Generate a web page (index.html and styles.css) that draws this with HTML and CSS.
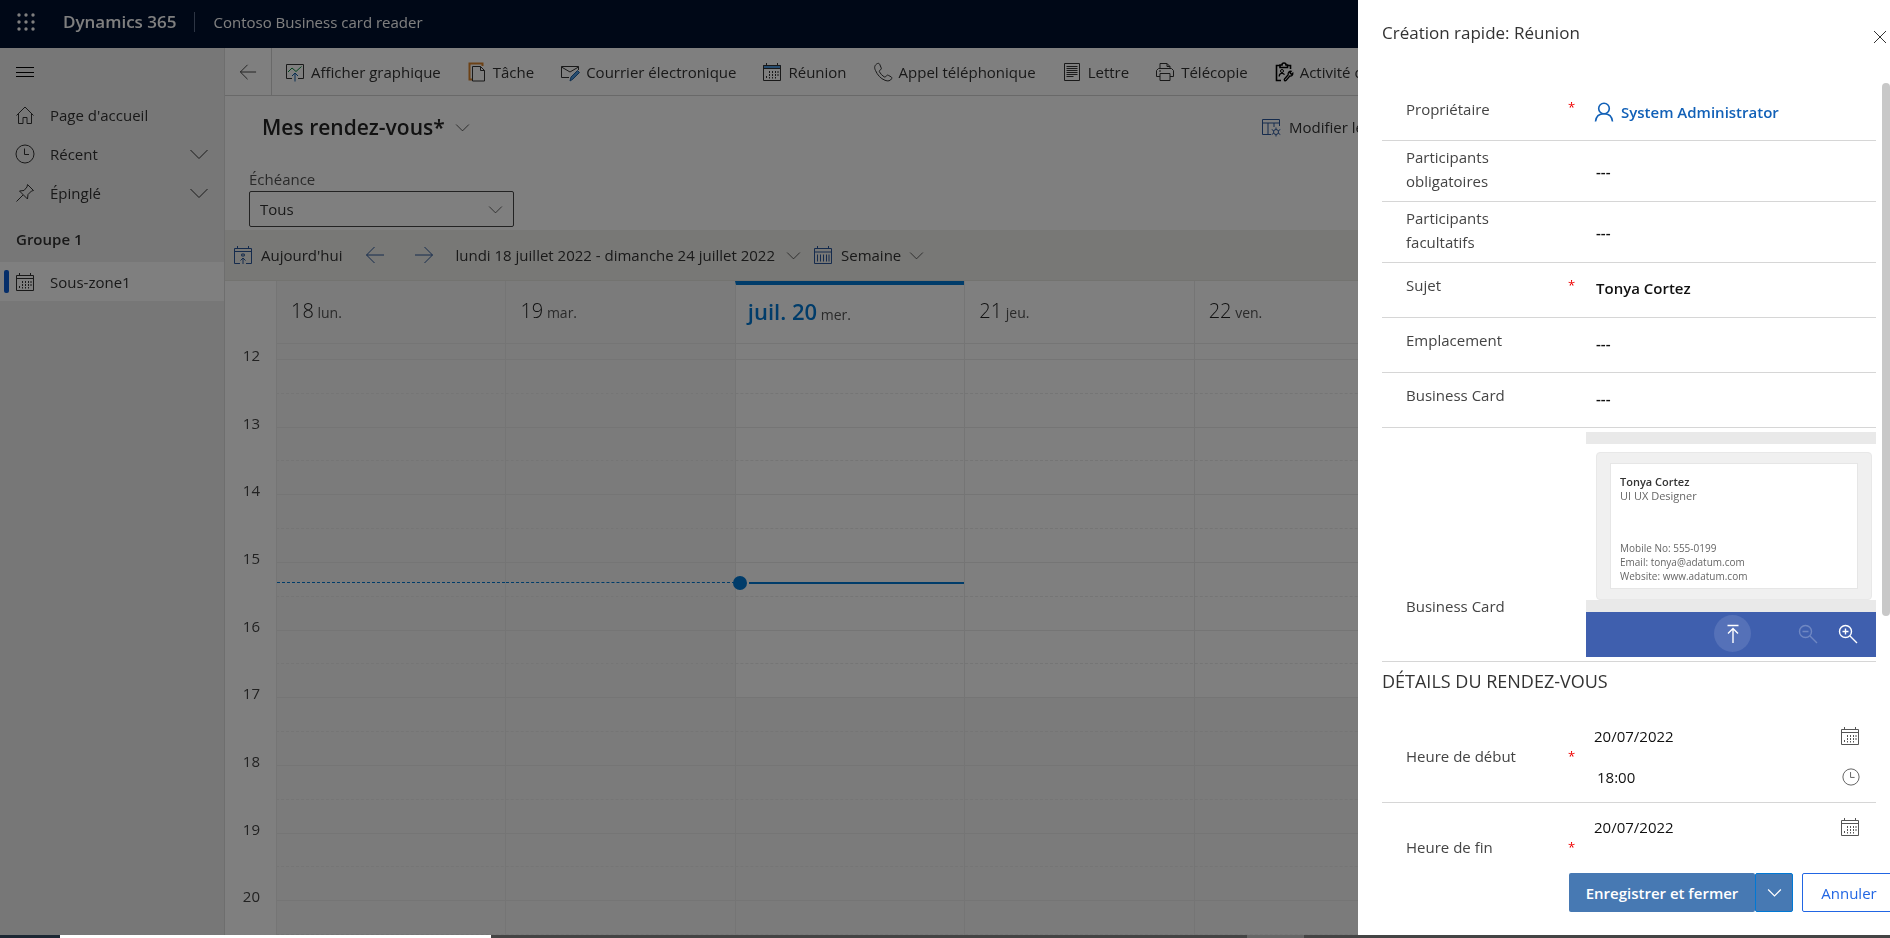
FILE: index.html
```html
<!DOCTYPE html>
<html lang="fr">
<head>
  <meta charset="UTF-8" />
  <meta name="viewport" content="width=device-width, initial-scale=1" />
  <title>Mes rendez-vous - Dynamics 365</title>
  <link rel="stylesheet" href="styles.css">
</head>
<body>
  <svg class="sprite" aria-hidden="true">
    <symbol id="i-waffle" viewBox="0 0 20 20">
      <g fill="currentColor"><circle cx="3" cy="3" r="1.700"/><circle cx="10" cy="3" r="1.700"/><circle cx="17" cy="3" r="1.700"/><circle cx="3" cy="10" r="1.700"/><circle cx="10" cy="10" r="1.700"/><circle cx="17" cy="10" r="1.700"/><circle cx="3" cy="17" r="1.700"/><circle cx="10" cy="17" r="1.700"/><circle cx="17" cy="17" r="1.700"/></g>
    </symbol>
    <symbol id="i-menu" viewBox="0 0 20 20"><path d="M1 5.500h18M1 10.500h18M1 14.500h18"/></symbol>
    <symbol id="i-home" viewBox="0 0 20 20"><path d="M1.500 10.500 10 2l8.500 8.500M3.500 9v9.500h4.500v-6h4v6h4.500V9"/></symbol>
    <symbol id="i-clock" viewBox="0 0 20 20"><circle cx="10" cy="10" r="9"/><path d="M9.500 4.500v6H14"/></symbol>
    <symbol id="i-pin" viewBox="0 0 20 20"><path d="m12.500 1.500 6 6-2 .5-3.500 3.500-.5 4.500-8-8L9 7.500 12 4zM8 12l-6.500 6.500"/></symbol>
    <symbol id="i-down" viewBox="0 0 20 20"><path d="m1.500 6 8.500 8.500L18.500 6"/></symbol>
    <symbol id="i-left" viewBox="0 0 20 20"><path d="M19 10H1.500M9.500 2l-8 8 8 8"/></symbol>
    <symbol id="i-right" viewBox="0 0 20 20"><path d="M1 10h17.500M10.500 2l8 8-8 8"/></symbol>
    <symbol id="i-close" viewBox="0 0 20 20"><path d="m4 4 12 12M16 4 4 16"/></symbol>
    <symbol id="i-calendar" viewBox="0 0 20 20">
      <path d="M1.500 3.500h17v15h-17zM1.500 6.500h17M4.500 1v3M15.500 1v3"/>
      <path d="M4.500 14v2.500M7.500 9v7.500M10.500 9v7.500M13.500 9v7.500M16 9v5" stroke-dasharray="2 1"/>
    </symbol>
    <symbol id="i-week" viewBox="0 0 20 20">
      <path d="M1.500 3.500h17v15h-17zM1.500 7h17M4.500 1v3M15.500 1v3M4.500 9.500v7M7.500 9.500v7M10.500 9.500v7M13.500 9.500v7M16 9.500v7"/>
    </symbol>
    <symbol id="i-today" viewBox="0 0 20 20"><path d="M7 18.500H1.500v-15h17v15H13M1.500 6.500h17M4.500 1v3M15.500 1v3M10 19v-6M7.500 15.500 10 13l2.500 2.500M8.700 9h2.600v2H8.700z"/></symbol>
    <symbol id="i-chart" viewBox="0 0 20 20">
      <path d="M7 16.500H1.500v-14h17v14H13"/>
      <path class="green" d="m3 10 4-4 4 3.500 5.500-5"/>
      <path class="blue" d="M10 19.500V11M7 14l3-3 3 3"/>
    </symbol>
    <symbol id="i-task" viewBox="0 0 20 20">
      <path class="orange" d="M6 17.500H2.500v-16h13V4"/>
      <path d="M5.500 4.500h8l4 4v10.500h-12zM13.500 4.500v4h4"/>
    </symbol>
    <symbol id="i-mail" viewBox="0 0 20 20">
      <path d="M9 15.500H1.500v-11h17V8M1.500 5 10 10l8.500-5"/>
      <path class="blue-fill" d="m10 19 1-4 6.500-6.500 2 2L13 17z"/>
    </symbol>
    <symbol id="i-meeting" viewBox="0 0 20 20">
      <path class="blue-fill" d="M1.500 3.500h17v3h-17z"/>
      <path d="M1.500 3.500h17v15h-17zM1.500 6.500h17M4.500 1v3M15.500 1v3"/>
      <path d="M4.500 14v2.500M7.500 9v7.500M10.500 9v7.500M13.500 9v7.500M16 9v5" stroke-dasharray="2 1"/>
    </symbol>
    <symbol id="i-phone" viewBox="0 0 20 20"><path d="M4.500 1.500c-3 1.500-3.500 4-2 7 2 4.500 5 8 9.500 9.800 3 1.200 5.500.7 6.700-1.800.3-.8 0-1.300-.7-1.700l-2.700-1.500c-.7-.4-1.300-.2-1.800.4l-.8 1c-.5.500-1 .5-1.600.1-2-1.300-3.500-2.800-4.600-4.900-.4-.7-.3-1.200.3-1.600l1-.7c.6-.5.700-1 .4-1.700L6.700 2.300C6.200 1.400 5.400 1.100 4.500 1.500z"/></symbol>
    <symbol id="i-letter" viewBox="0 0 20 20"><path d="M2.500 1.500h15v17h-15z"/><path d="M4.500 4.500h11M4.500 6.500h11M4.500 8.500h11M4.500 10.500h11M4.500 12.500h11M4.500 14.500h7"/></symbol>
    <symbol id="i-fax" viewBox="0 0 20 20"><path d="M5 14.500H1.500v-6l2-2h13l2 2v6H15M5 6.500v-5h7l3 3v2M12 1.500v3h3M5 11.500h10v7H5zM4 9h2"/></symbol>
    <symbol id="i-activity" viewBox="0 0 20 20">
      <path stroke-width="1.600" d="M7 18.500H2.500v-15H6M13.500 3.500h3V7M6 5.500v-2.500h2a2 2 0 0 1 4 0h1.500v2.500z"/>
      <circle cx="8" cy="9" r="1.500"/>
      <path stroke-width="1.300" d="M5.200 14.500c0-3.500 4-4 5.300-1.800M10.500 17l3.700-4.200c-.5-2 1-3.800 3-3.500L16 11l1.200 1.200 1.600-1c.2 2-1.300 3.200-3 2.800L12 18.500c-1 .8-2.300-.5-1.500-1.500z"/>
    </symbol>
    <symbol id="i-columns" viewBox="0 0 20 20">
      <path d="M10 17.500H1.500v-15h17V9M1.500 6h17M7 6v11.500M13 6v4"/>
      <circle cx="15" cy="15" r="2.500"/>
      <path d="M15 10.500v2M15 17.500v2M10.700 12.500l2 1.200M17.300 16.300l2 1.200M19.300 12.500l-2 1.200M12.700 16.300l-2 1.200"/>
    </symbol>
    <symbol id="i-user" viewBox="0 0 20 20"><circle cx="10" cy="6.500" r="5.300"/><path d="M1.500 19.500c.5-5 4-7.700 8.500-7.700s8 2.700 8.500 7.700"/></symbol>
    <symbol id="i-upload" viewBox="0 0 20 20"><path d="M4.500 1.500h11M10 19V5M5 9.500 10 4.500l5 5"/></symbol>
    <symbol id="i-zoom-out" viewBox="0 0 20 20"><circle cx="7.500" cy="7.500" r="6"/><path d="m12 12 7 7M4.500 7.500h6"/></symbol>
    <symbol id="i-zoom-in" viewBox="0 0 20 20"><circle cx="7.500" cy="7.500" r="6"/><path d="m12 12 7 7M4.500 7.500h6M7.500 4.500v6"/></symbol>
  </svg>

  <div class="app">
    <header class="topbar">
      <button type="button" class="waffle" aria-label="Lanceur d'applications"><svg class="icon"><use href="#i-waffle"/></svg></button>
      <a href="#" class="brand">Dynamics 365</a>
      <a href="#" class="app-name">Contoso Business card reader</a>
    </header>

    <div class="shell">
      <nav class="sidebar">
        <button type="button" class="hamburger" aria-label="Menu"><svg class="icon"><use href="#i-menu"/></svg></button>
        <a href="#" class="nav-item"><svg class="icon"><use href="#i-home"/></svg><span>Page d'accueil</span></a>
        <button type="button" class="nav-item"><svg class="icon"><use href="#i-clock"/></svg><span>Récent</span><svg class="icon"><use href="#i-down"/></svg></button>
        <button type="button" class="nav-item"><svg class="icon"><use href="#i-pin"/></svg><span>Épinglé</span><svg class="icon"><use href="#i-down"/></svg></button>
        <h2 class="nav-group">Groupe 1</h2>
        <a href="#" class="nav-item selected"><svg class="icon"><use href="#i-calendar"/></svg><span>Sous-zone1</span></a>
      </nav>

      <main class="content">
        <div class="commands">
          <button type="button" class="back" aria-label="Retour"><svg class="icon small"><use href="#i-left"/></svg></button>
          <button type="button"><svg class="icon"><use href="#i-chart"/></svg>Afficher graphique</button>
          <button type="button"><svg class="icon"><use href="#i-task"/></svg>Tâche</button>
          <button type="button"><svg class="icon"><use href="#i-mail"/></svg>Courrier électronique</button>
          <button type="button"><svg class="icon"><use href="#i-meeting"/></svg>Réunion</button>
          <button type="button"><svg class="icon"><use href="#i-phone"/></svg>Appel téléphonique</button>
          <button type="button"><svg class="icon"><use href="#i-letter"/></svg>Lettre</button>
          <button type="button"><svg class="icon"><use href="#i-fax"/></svg>Télécopie</button>
          <button type="button"><svg class="icon black"><use href="#i-activity"/></svg>Activité de service</button>
        </div>

        <div class="view-head">
          <h1><button type="button">Mes rendez-vous*<svg class="icon tiny"><use href="#i-down"/></svg></button></h1>
          <button type="button" class="edit-columns"><svg class="icon navy"><use href="#i-columns"/></svg>Modifier les colonnes</button>
        </div>

        <div class="filter">
          <label for="due">Échéance</label>
          <div class="select-wrap">
            <select id="due"><option>Tous</option></select>
            <svg class="icon tiny"><use href="#i-down"/></svg>
          </div>
        </div>

        <div class="cal-toolbar">
          <button type="button"><svg class="icon navy"><use href="#i-today"/></svg>Aujourd'hui</button>
          <button type="button" class="arrow" aria-label="Semaine précédente"><svg class="icon navy"><use href="#i-left"/></svg></button>
          <button type="button" class="arrow" aria-label="Semaine suivante"><svg class="icon navy"><use href="#i-right"/></svg></button>
          <button type="button" class="range">lundi 18 juillet 2022 - dimanche 24 juillet 2022<svg class="icon tiny"><use href="#i-down"/></svg></button>
          <button type="button"><svg class="icon navy"><use href="#i-week"/></svg>Semaine<svg class="icon tiny"><use href="#i-down"/></svg></button>
        </div>

        <div class="cal-days">
          <div class="day past"><b>18</b> lun.</div>
          <div class="day past"><b>19</b> mar.</div>
          <div class="day today"><b>juil. 20</b> mer.</div>
          <div class="day"><b>21</b> jeu.</div>
          <div class="day"><b>22</b> ven.</div>
          <div class="day"><b>23</b> sam.</div>
          <div class="day"><b>24</b> dim.</div>
        </div>

        <div class="cal-body">
          <div class="hours">
            <span>12</span><span>13</span><span>14</span><span>15</span><span>16</span><span>17</span><span>18</span><span>19</span><span>20</span>
          </div>
          <div class="slots">
            <i class="hour"></i>
            <i></i><i class="hour"></i>
            <i></i><i class="hour"></i>
            <i></i><i class="hour"></i>
            <i></i><i class="hour"></i>
            <i></i><i class="hour"></i>
            <i class="off"></i><i class="off hour"></i>
            <i class="off"></i><i class="off hour"></i>
            <i class="off"></i><i class="off hour"></i>
            <i class="off"></i>
          </div>
          <div class="lanes">
            <div class="lane past"></div>
            <div class="lane past"></div>
            <div class="lane today"></div>
            <div class="lane"></div>
            <div class="lane"></div>
            <div class="lane"></div>
            <div class="lane"></div>
          </div>
        </div>
      </main>
    </div>
    <div class="overlay"></div>

    <form class="drawer">
      <header class="drawer-head">
        <h2>Création rapide: Réunion</h2>
        <button type="button" aria-label="Fermer"><svg class="icon"><use href="#i-close"/></svg></button>
      </header>

      <div class="fields">
        <div class="field first">
          <span class="label">Propriétaire</span><span class="star">*</span>
          <a href="#" class="owner"><svg class="icon"><use href="#i-user"/></svg>System Administrator</a>
        </div>
        <div class="field two-lines">
          <label for="required">Participants obligatoires</label><span class="star"></span>
          <input type="text" id="required" value="---" />
        </div>
        <div class="field two-lines">
          <label for="optional">Participants facultatifs</label><span class="star"></span>
          <input type="text" id="optional" value="---" />
        </div>
        <div class="field">
          <label for="subject">Sujet</label><span class="star">*</span>
          <input type="text" id="subject" value="Tonya Cortez" />
        </div>
        <div class="field">
          <label for="place">Emplacement</label><span class="star"></span>
          <input type="text" id="place" value="---" />
        </div>
        <div class="field">
          <label for="card">Business Card</label><span class="star"></span>
          <input type="text" id="card" value="---" />
        </div>
        <div class="field card-field">
          <span class="label">Business Card</span><span class="star"></span>
          <div class="card-viewer">
            <div class="card-frame">
              <div class="card">
                <p class="name">Tonya Cortez</p>
                <p class="job">UI UX Designer</p>
                <p>Mobile No: 555-0199</p>
                <p>Email: tonya@adatum.com</p>
                <p>Website: www.adatum.com</p>
              </div>
            </div>
            <div class="card-tools">
              <button type="button" class="upload" aria-label="Charger"><svg class="icon"><use href="#i-upload"/></svg></button>
              <button type="button" aria-label="Zoom arrière" disabled><svg class="icon"><use href="#i-zoom-out"/></svg></button>
              <button type="button" aria-label="Zoom avant"><svg class="icon"><use href="#i-zoom-in"/></svg></button>
            </div>
          </div>
        </div>

        <h3>DÉTAILS DU RENDEZ-VOUS</h3>

        <div class="field time-field">
          <label for="start-date">Heure de début</label><span class="star">*</span>
          <div class="when">
            <div><input type="text" id="start-date" value="20/07/2022" /><svg class="icon"><use href="#i-calendar"/></svg></div>
            <div class="hour-line"><input type="text" aria-label="Heure de début" value="18:00" /><svg class="icon small"><use href="#i-clock"/></svg></div>
          </div>
        </div>
        <div class="field time-field">
          <label for="end-date">Heure de fin</label><span class="star">*</span>
          <div class="when">
            <div><input type="text" id="end-date" value="20/07/2022" /><svg class="icon"><use href="#i-calendar"/></svg></div>
            <div class="hour-line"></div>
          </div>
        </div>
      </div>
      <div class="scroll-thumb"></div>

      <footer class="drawer-foot">
        <button type="submit" class="save">Enregistrer et fermer</button>
        <button type="button" class="save-more" aria-label="Autres options"><svg class="icon tiny"><use href="#i-down"/></svg></button>
        <button type="button" class="cancel">Annuler</button>
      </footer>
    </form>
  </div>
  <div class="taskbar"></div>
</body>
</html>
```

FILE: styles.css
```css
:root {
  --text: #333;
  --line: #ebebeb;
  --blue: #0078d4;
  --navy: #2b579a;
  --off: #f7f7f7;
}

* {
  box-sizing: border-box;
}

body {
  margin: 0;
  height: 100vh;
  display: flex;
  flex-direction: column;
  overflow: hidden;
  font-family: "Segoe UI", "Open Sans", "Noto Sans", sans-serif;
  font-size: 15px;
  line-height: 20px;
  color: var(--text);
}

h1, h2, h3, p {
  margin: 0;
  font-weight: normal;
}

a {
  color: inherit;
  text-decoration: none;
}

button, input, select {
  font: inherit;
  color: inherit;
  background: none;
  border: none;
  padding: 0;
  margin: 0;
}

button {
  cursor: pointer;
  white-space: nowrap;
}

.sprite {
  display: none;
}

.icon {
  width: 20px;
  height: 20px;
  flex: none;
  display: block;
  fill: none;
  stroke: currentColor;
  stroke-width: 1;
}

.icon.small { width: 18px; height: 18px; }
.icon.tiny { width: 15px; height: 15px; }
.icon.navy { color: var(--navy); }
.icon.black { color: #000; }
.green { stroke: #0a8a3c; }
.blue { stroke: #0f5ba7; }
.orange { stroke: #d9822b; stroke-width: 2; }
.blue-fill { fill: #4f9be0; stroke: #1f5f9f; }
#i-waffle { stroke: none; }

.app {
  flex: 1;
  min-height: 0;
  display: flex;
  flex-direction: column;
  position: relative;
}

/* top bar */
.topbar {
  height: 48px;
  flex: none;
  display: flex;
  align-items: center;
  padding: 0 16px 4px;
  background: #00102e;
  color: #fff;
}

.brand {
  margin-left: 27px;
  padding-right: 18px;
  border-right: 1px solid #5a6a88;
  font-size: 17px;
  font-weight: 600;
}

.app-name {
  margin-left: 18px;
}

.shell {
  flex: 1;
  min-height: 0;
  display: flex;
}

/* left navigation */
.sidebar {
  width: 225px;
  flex: none;
  padding-top: 14px;
  background: #efefef;
  border-right: 1px solid #dcdcdc;
}

.hamburger {
  margin: 0 0 13px 15px;
  color: #000;
}

.nav-item {
  width: 100%;
  height: 39px;
  display: flex;
  align-items: center;
  padding: 0 15px;
  text-align: left;
}

.nav-item span {
  flex: 1;
  margin-left: 15px;
}

.nav-group {
  padding: 17px 16px 13px;
  font-size: 15px;
  font-weight: 600;
}

.selected {
  background: #fff;
  padding-left: 4px;
}

.selected::before {
  content: "";
  width: 5px;
  height: 23px;
  margin-right: 6px;
  border-radius: 2px;
  background: #0b5cd5;
}

/* main area */
.content {
  flex: 1;
  min-width: 0;
  display: flex;
  flex-direction: column;
  background: #fff;
}

.commands {
  height: 48px;
  flex: none;
  display: flex;
  overflow: hidden;
  border-bottom: 1px solid #d2d2d2;
}

.commands button {
  display: flex;
  align-items: center;
  gap: 6px;
  padding: 0 13px;
}

.commands .back {
  width: 47px;
  justify-content: center;
  border-right: 1px solid #d2d2d2;
}

.view-head {
  display: flex;
  align-items: center;
  justify-content: space-between;
  padding: 16px 452px 0 37px;
}

.view-head button {
  display: flex;
  align-items: center;
  gap: 8px;
}

.view-head h1 {
  font-size: 21px;
  line-height: 30px;
  font-weight: 600;
  color: #242424;
}

.view-head h1 button {
  gap: 10px;
}

.filter {
  width: 289px;
  padding: 27px 0 3px 24px;
}

.filter label {
  display: block;
  margin-bottom: 2px;
  color: #555;
}

.select-wrap {
  display: flex;
  align-items: center;
  height: 36px;
  border: 1px solid #444;
  border-radius: 2px;
  padding-right: 10px;
}

.select-wrap select {
  flex: 1;
  appearance: none;
  padding-left: 10px;
}

.cal-toolbar {
  height: 51px;
  flex: none;
  display: flex;
  align-items: center;
  padding-left: 8px;
  background: #f1f1ed;
  border-bottom: 1px solid #e6e6e0;
}

.cal-toolbar button {
  display: flex;
  align-items: center;
  gap: 8px;
  margin-right: 12px;
}

.cal-toolbar .arrow {
  margin: 0 5px 0 11px;
  padding-right: 13px;
}

.cal-toolbar .range {
  margin-left: 3px;
  gap: 11px;
}

/* calendar */
.cal-days {
  display: grid;
  grid-template-columns: repeat(7, 1fr);
  height: 63px;
  flex: none;
  padding: 0 8px 0 51px;
}

.day {
  border-left: 1px solid var(--line);
  border-bottom: 1px solid var(--line);
  padding: 15px 0 0 14px;
  font-size: 14px;
  line-height: 30px;
  color: #555;
}

.day b {
  font-size: 20px;
  font-weight: 300;
  color: #222;
}

.day.past {
  background: var(--off);
}

.day.today {
  border-top: 4px solid var(--blue);
  padding: 11px 0 0 12px;
}

.day.today b {
  font-size: 22px;
  font-weight: 600;
  color: var(--blue);
}

.cal-body {
  flex: 1;
  min-height: 0;
  display: grid;
  grid-template-columns: 51px 1fr;
  padding-right: 8px;
}

.hours {
  display: grid;
  grid-template-rows: 16px repeat(8, 2fr) 1fr;
}

.hours span {
  align-self: end;
  justify-self: end;
  margin: 0 16px -5px 0;
  color: #444;
}

.slots,
.lanes {
  grid-area: 1 / 2;
  display: grid;
}

.slots {
  grid-template-rows: 16px repeat(17, 1fr);
}

.slots i {
  border-bottom: 1px dashed var(--line);
}

.slots .hour {
  border-bottom-style: solid;
}

.slots .off {
  background: var(--off);
}

.lanes {
  grid-template-columns: repeat(7, 1fr);
  mix-blend-mode: darken;
}

.lane {
  position: relative;
  border-left: 1px solid var(--line);
}

.lane.past {
  background: var(--off);
}

/* current time marker */
.lane.past::after,
.lane.today::after {
  content: "";
  position: absolute;
  top: 40%;
  left: 0;
  right: 0;
  margin-top: 2px;
  border-top: 1px dashed var(--blue);
}

.lane.today::after {
  left: 13px;
  border-top: 2px solid var(--blue);
}

.lane.today::before {
  content: "";
  position: absolute;
  top: 40%;
  left: -3px;
  width: 14px;
  height: 14px;
  margin-top: -4px;
  border-radius: 50%;
  background: var(--blue);
}

.overlay {
  position: absolute;
  inset: 0;
  background: rgba(0, 0, 0, 0.5);
}

/* quick create drawer */
.drawer {
  position: absolute;
  top: 0;
  right: 0;
  bottom: 0;
  width: 532px;
  display: flex;
  flex-direction: column;
  overflow: hidden;
  background: #fff;
}

.drawer-head {
  height: 83px;
  flex: none;
  display: flex;
  justify-content: space-between;
  align-items: start;
  padding: 18px 0 0 24px;
}

.drawer-head h2 {
  font-size: 17px;
  line-height: 30px;
}

.drawer-head button {
  margin-top: 9px;
}

.fields {
  flex: 1;
  min-height: 0;
  overflow: hidden;
  padding: 0 14px 0 24px;
}

.field {
  display: grid;
  grid-template-columns: 150px 30px 1fr;
  align-items: center;
  min-height: 55px;
  padding-left: 24px;
  border-bottom: 1px solid #d6d6d6;
}

.field label,
.field .label {
  line-height: 24px;
  margin-bottom: 10px;
  color: #444;
}

.star {
  padding-left: 12px;
  margin-bottom: 10px;
  font-size: 13px;
  color: #e00;
}

.field input {
  width: 100%;
  height: 32px;
  margin-bottom: 4px;
  padding-left: 10px;
  font-weight: 600;
  color: #111;
}

.field.first {
  min-height: 58px;
}

.two-lines {
  min-height: 61px;
}

.field.two-lines label {
  margin-bottom: 4px;
}

.field.first .label {
  margin-bottom: 6px;
}

.field.two-lines input {
  margin-bottom: 0;
}

.owner {
  display: flex;
  align-items: center;
  gap: 7px;
  padding-left: 8px;
  font-weight: 600;
  color: #1160b7;
}

.owner .icon {
  stroke-width: 1.6;
}

.card-field {
  min-height: 234px;
}

.field.card-field .label {
  align-self: end;
  margin-bottom: 43px;
}

.card-viewer {
  padding-top: 12px;
  background: linear-gradient(#e9e9e9 12px, #fff 12px);
}

.card-frame {
  margin: 8px 4px 0 10px;
  padding: 10px 13px;
  height: 148px;
  background: #f0f0f0;
  border: 1px solid #e8e8e8;
  border-radius: 4px;
}

.card {
  height: 126px;
  padding: 11px 9px;
  background: #fff;
  border: 1px solid #e6e6e6;
  font-size: 10px;
  line-height: 14px;
  color: #666;
}

.card .name {
  font-size: 11px;
  font-weight: 600;
  color: #333;
}

.card .job {
  font-size: 11px;
  margin-bottom: 38px;
}

.card-tools {
  display: flex;
  align-items: center;
  justify-content: flex-end;
  height: 57px;
  padding: 10px 18px 0 0;
  background: linear-gradient(#e9e9e9 12px, #3f5fae 12px);
  color: #fff;
}

.card-tools button {
  margin-left: 20px;
}

.card-tools .upload {
  width: 37px;
  height: 37px;
  display: flex;
  align-items: center;
  justify-content: center;
  margin-right: 27px;
  border-radius: 50%;
  background: #5571b8;
}

.card-tools .icon {
  stroke-width: 1.4;
}

.card-tools button:disabled {
  opacity: 0.25;
}

.fields h3 {
  padding: 4px 0 16px;
  font-size: 18px;
  line-height: 30px;
}

.time-field {
  min-height: 91px;
}

.field.time-field label {
  margin-bottom: 2px;
}

.time-field .star {
  margin-bottom: 2px;
}

.when {
  padding-top: 8px;
}

.when > div {
  display: flex;
  align-items: center;
  height: 32px;
  padding-right: 16px;
}

.when > .hour-line {
  height: 50px;
}

.when .icon {
  color: #555;
}

.field .when input {
  margin-bottom: 0;
  padding-left: 8px;
  font-weight: 400;
}

.field .hour-line input {
  padding-left: 11px;
}

.scroll-thumb {
  position: absolute;
  top: 83px;
  right: 0;
  width: 8px;
  height: 57%;
  border-radius: 4px;
  background: #c8c8c8;
}

.drawer-foot {
  flex: none;
  display: flex;
  padding: 10px 0 23px 211px;
}

.drawer-foot button {
  height: 39px;
  flex: none;
  border-radius: 2px;
}

.drawer-foot .save {
  width: 186px;
  background: #4779b3;
  color: #fff;
  font-weight: 600;
}

.drawer-foot .save-more {
  width: 38px;
  display: flex;
  align-items: center;
  justify-content: center;
  background: #4779b3;
  border: 1px solid var(--blue);
  color: #fff;
}

.drawer-foot .save-more .icon {
  stroke-width: 1.6;
}

.drawer-foot .cancel {
  width: 94px;
  margin-left: 9px;
  border: 1px solid #2266e3;
  color: #2266e3;
}

.taskbar {
  height: 3px;
  flex: none;
  background: linear-gradient(90deg, #1c2733 3.2%, #fff 3.2% 26%, #444 26% 66%, #666 66% 69%, #444 69%);
}
```
